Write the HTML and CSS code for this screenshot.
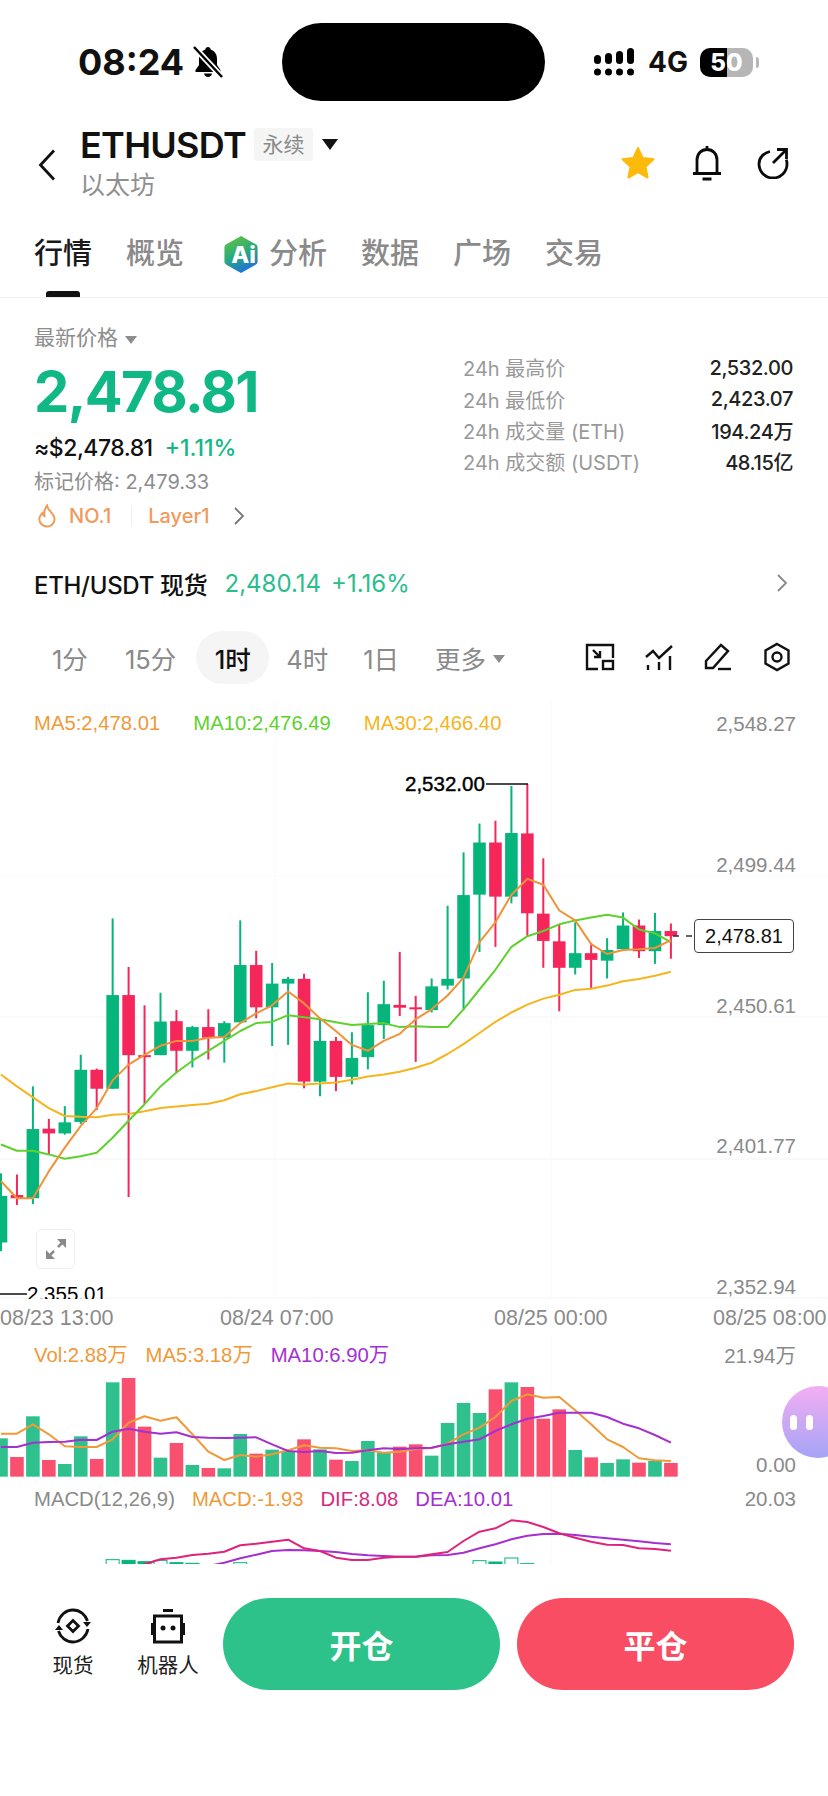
FILE: index.html
```html
<!DOCTYPE html>
<html lang="zh-CN">
<head>
    <meta charset="UTF-8">
    <meta name="viewport" content="width=device-width, initial-scale=1.0">
    <title>ETHUSDT</title>
    <link rel="stylesheet" href="styles.css">
</head>
<body>
    <div class="page">
        <div class="status-bar">
            <div class="status-left">
                <span class="clock">08:24</span>
                <svg class="mute-icon" viewBox="0 0 30 32" width="30" height="32">
                    <path d="M15 1c-1.500 0-2.500 1-2.700 2.500C8 5 6 8.500 6 13v6l-3.500 5v2h25v-2L24 19v-6c0-4.500-2-8-6.300-9.500C17.500 2 16.500 1 15 1z" fill="#000"/>
                    <path d="M11 27.500h8c-.3 2.200-2 3.500-4 3.500s-3.700-1.300-4-3.500z" fill="#000"/>
                    <path d="M1 1l28 30" stroke="#fff" stroke-width="6"/>
                    <path d="M1 1l28 30" stroke="#000" stroke-width="2.500"/>
                </svg>
            </div>
            <div class="island"></div>
            <div class="status-right">
                <svg viewBox="0 0 44 30" width="44" height="30">
                    <g fill="#000">
                        <rect x="2" y="8" width="7" height="9" rx="3.500"/>
                        <rect x="13" y="6" width="7" height="11" rx="3.500"/>
                        <rect x="24" y="4" width="7" height="13" rx="3.500"/>
                        <rect x="35" y="1" width="7" height="16" rx="3.500"/>
                        <circle cx="5.500" cy="25" r="3.500"/>
                        <circle cx="16.500" cy="25" r="3.500"/>
                        <circle cx="27.500" cy="25" r="3.500"/>
                        <circle cx="38.500" cy="25" r="3.500"/>
                    </g>
                </svg>
                <span class="network">4G</span>
                <span class="battery">50</span>
            </div>
        </div>

        <div class="header">
            <svg class="back-icon" viewBox="0 0 18 32" width="18" height="32">
                <path d="M16 1.500L2.500 16 16 30.500" fill="none" stroke="#111" stroke-width="2.800"/>
            </svg>
            <div class="title-block">
                <div class="title-row">
                    <span class="symbol">ETHUSDT</span>
                    <span class="badge">永续</span>
                    <span class="title-caret"></span>
                </div>
                <div class="subtitle">以太坊</div>
            </div>
            <div class="header-actions">
                <svg viewBox="0 0 36 36" width="36" height="36">
                    <path d="M18 3l4.600 10 10.900 1.300-8 7.500 2.100 10.700L18 27.200 8.400 32.500l2.100-10.700-8-7.500L13.400 13z" fill="#fdba0a" stroke="#fdba0a" stroke-width="2" stroke-linejoin="round"/>
                </svg>
                <svg viewBox="0 0 30 36" width="30" height="36">
                    <path d="M15 1v3M5 28V15C5 9 9 4.500 15 4.500S25 9 25 15v13M1 28.500h28M10.500 34h9" fill="none" stroke="#0a0a0a" stroke-width="2.800"/>
                </svg>
                <svg viewBox="0 0 32 32" width="32" height="32">
                    <path d="M13 4.500C7 5.800 2 10.500 2 17a14 14 0 0 0 28 0c0-1.500-.2-3-.7-4.400" fill="none" stroke="#0a0a0a" stroke-width="2.800"/>
                    <path d="M16 16L29 3M20 2.500h9.500V12" fill="none" stroke="#0a0a0a" stroke-width="2.800"/>
                </svg>
            </div>
        </div>

        <div class="tabs">
            <span class="tab tab-active">行情</span>
            <span class="tab">概览</span>
            <span class="tab tab-ai">
                <svg viewBox="0 0 36 40" width="36" height="39">
                    <defs>
                        <linearGradient id="ai-fill" x1="0.200" y1="0" x2="0.600" y2="1">
                            <stop offset="0" stop-color="#62c23f"/>
                            <stop offset="0.500" stop-color="#2bab7c"/>
                            <stop offset="1" stop-color="#1c6fe0"/>
                        </linearGradient>
                    </defs>
                    <path d="M18 1l15 8.500c1.200.7 2 1.800 2 3.200v14.600c0 1.400-.8 2.500-2 3.200L18 39 3 30.500c-1.200-.7-2-1.800-2-3.200V12.700c0-1.400.8-2.500 2-3.200z" fill="url(#ai-fill)"/>
                    <text class="ai-letters" x="8" y="29">Ai</text>
                </svg>
                分析
            </span>
            <span class="tab">数据</span>
            <span class="tab">广场</span>
            <span class="tab">交易</span>
        </div>

        <div class="summary">
            <div class="summary-left">
                <div class="price-label">最新价格<span class="small-caret"></span></div>
                <div class="last-price">2,478.81</div>
                <div class="price-sub">
                    <span class="usd-price">≈$2,478.81</span>
                    <span class="change">+1.11%</span>
                </div>
                <div class="mark-price">标记价格: 2,479.33</div>
                <div class="tags">
                    <svg viewBox="0 0 20 24" width="20" height="24">
                        <path d="M10 1.500c.5 4 5 6.500 7 11 1.800 4.500-1.500 10-7 10S1.300 17.500 2.700 13c.6-1.800 1.700-3 2.800-4 .3 1.500.8 2.500 2 3C7 8 8 4 10 1.500z" fill="none" stroke="#f09a5c" stroke-width="2"/>
                    </svg>
                    <span class="tag-text tag-rank">NO.1</span>
                    <span class="tag-divider"></span>
                    <span class="tag-text">Layer1</span>
                    <svg class="tag-arrow" viewBox="0 0 12 20" width="12" height="20">
                        <path d="M2 2l8 8-8 8" fill="none" stroke="#777" stroke-width="1.800"/>
                    </svg>
                </div>
            </div>
            <div class="stats">
                <div class="stat-row"><span>24h 最高价</span><b>2,532.00</b></div>
                <div class="stat-row"><span>24h 最低价</span><b>2,423.07</b></div>
                <div class="stat-row"><span>24h 成交量 (ETH)</span><b>194.24万</b></div>
                <div class="stat-row"><span>24h 成交额 (USDT)</span><b>48.15亿</b></div>
            </div>
        </div>

        <div class="spot-row">
            <span class="spot-name">ETH/USDT 现货</span>
            <span class="spot-price">2,480.14</span>
            <span class="spot-price">+1.16%</span>
            <svg class="spot-arrow" viewBox="0 0 12 20" width="12" height="20">
                <path d="M2 2l8 8-8 8" fill="none" stroke="#888" stroke-width="1.800"/>
            </svg>
        </div>

        <div class="timeframes">
            <span class="frame">1分</span>
            <span class="frame frame-15m">15分</span>
            <span class="frame frame-active">1时</span>
            <span class="frame frame-4h">4时</span>
            <span class="frame frame-1d">1日</span>
            <span class="frame frame-more">更多<span class="small-caret"></span></span>
            <div class="chart-tools">
                <svg viewBox="0 0 30 30" width="30" height="30">
                    <g fill="none" stroke="#111" stroke-width="2.400">
                        <path d="M13 27H2V3h26v13"/>
                        <rect x="18" y="19" width="10" height="8"/>
                        <path d="M8 8l7 7M15 9v6H9"/>
                    </g>
                </svg>
                <svg viewBox="0 0 30 30" width="30" height="30">
                    <g fill="none" stroke="#111" stroke-width="2.400">
                        <path d="M2 15l7-6 6 7 13-12"/>
                        <path d="M4 23v5M15 20v8M26 14v14"/>
                    </g>
                </svg>
                <svg viewBox="0 0 30 30" width="30" height="30">
                    <g fill="none" stroke="#111" stroke-width="2.400">
                        <path d="M3 19L18 3l7 6L10 26H3z"/>
                        <path d="M15 27h13"/>
                    </g>
                </svg>
                <svg viewBox="0 0 30 30" width="30" height="30">
                    <g fill="none" stroke="#111" stroke-width="2.400">
                        <path d="M15 2l11.500 6.500v13L15 28 3.500 21.500v-13z"/>
                        <circle cx="15" cy="15" r="4.500"/>
                    </g>
                </svg>
            </div>
        </div>

        <div class="chart">
            <div class="pane pane-main">
                <svg id="main-svg" class="pane-svg" width="828" height="598"></svg>
                <div class="legend">
                    <span class="c-orange">MA5:2,478.01</span>
                    <span class="c-green">MA10:2,476.49</span>
                    <span class="c-yellow">MA30:2,466.40</span>
                </div>
                <div class="price-axis">
                    <span>2,548.27</span>
                    <span>2,499.44</span>
                    <span>2,450.61</span>
                    <span>2,401.77</span>
                    <span>2,352.94</span>
                </div>
                <div class="marker marker-high">2,532.00</div>
                <div class="marker marker-low">2,355.01</div>
                <div class="last-tag">2,478.81</div>
                <div class="expand-btn">
                    <svg viewBox="0 0 22 22" width="22" height="22">
                        <path d="M2 20l7-7M13 9l7-7" stroke="#8a8a8a" stroke-width="2.500"/>
                        <path d="M1 12v9h9zM21 10V1h-9z" fill="#8a8a8a"/>
                    </svg>
                </div>
            </div>
            <div class="time-axis">
                <span>08/23 13:00</span>
                <span>08/24 07:00</span>
                <span>08/25 00:00</span>
                <span>08/25 08:00</span>
            </div>
            <div class="pane pane-vol">
                <svg id="vol-svg" class="pane-svg" width="828" height="147"></svg>
                <div class="legend legend-vol">
                    <span class="c-orange">Vol:2.88万</span>
                    <span class="c-orange">MA5:3.18万</span>
                    <span class="c-purple">MA10:6.90万</span>
                </div>
                <span class="side-value vol-max">21.94万</span>
                <span class="side-value vol-min">0.00</span>
            </div>
            <div class="pane pane-macd">
                <svg id="macd-svg" class="pane-svg" width="828" height="80"></svg>
                <div class="legend legend-macd">
                    <span class="c-gray">MACD(12,26,9)</span>
                    <span class="c-orange">MACD:-1.93</span>
                    <span class="c-pink">DIF:8.08</span>
                    <span class="c-purple">DEA:10.01</span>
                </div>
                <span class="side-value macd-max">20.03</span>
            </div>
            <div class="float-bubble">
                <span class="bubble-eye"></span>
                <span class="bubble-eye"></span>
            </div>
        </div>

        <div class="bottom-bar">
            <div class="quick quick-spot">
                <svg viewBox="0 0 36 36" width="36" height="36">
                    <g fill="none" stroke="#111" stroke-width="2.800">
                        <path d="M3 15C4.500 7.500 10.500 2 18 2c7 0 12.500 4.500 14.500 11"/>
                        <path d="M33 21c-1.500 7.500-7.500 13-15 13-7 0-12.500-4.500-14.500-11"/>
                        <path d="M18 12.500l5.500 5.500-5.500 5.500-5.500-5.500z"/>
                    </g>
                    <path d="M28 14h8l-4 5zM0 22h8l-4-5z" fill="#111"/>
                </svg>
                <span>现货</span>
            </div>
            <div class="quick quick-bot">
                <svg viewBox="0 0 36 36" width="36" height="36">
                    <rect x="13" y="1" width="10" height="3" fill="#111"/>
                    <rect x="4.500" y="8" width="27" height="26" fill="none" stroke="#111" stroke-width="3"/>
                    <rect x="1" y="15" width="3" height="12" fill="#111"/>
                    <rect x="32" y="15" width="3" height="12" fill="#111"/>
                    <circle cx="13" cy="20" r="2.500" fill="#111"/>
                    <circle cx="23" cy="20" r="2.500" fill="#111"/>
                </svg>
                <span>机器人</span>
            </div>
            <button class="trade-btn btn-open">开仓</button>
            <button class="trade-btn btn-close">平仓</button>
        </div>
    </div>
    <script src="chart.js"></script>
</body>
</html>
```

FILE: styles.css
```css
* {
    margin: 0;
    padding: 0;
    box-sizing: border-box;
}

body {
    background-color: #ffffff;
    color: #111111;
    font-family: Inter, 'Noto Sans CJK SC', sans-serif;
}

svg {
    display: block;
    flex-shrink: 0;
}

.page {
    width: 828px;
    height: 1796px;
    overflow: hidden;
}

/* status bar */
.status-bar {
    display: grid;
    grid-template-columns: 282px 263px 283px;
    align-items: center;
    align-content: start;
    height: 120px;
    padding-top: 23px;
}

.status-left {
    display: flex;
    align-items: center;
    gap: 9px;
    padding-left: 78px;
}

.clock {
    font-size: 36px;
    font-weight: 700;
    line-height: 1;
}

.island {
    height: 78px;
    background-color: #000000;
    border-radius: 39px;
}

.status-right {
    display: flex;
    align-items: center;
    gap: 12px;
    padding-left: 47px;
}

.network {
    font-size: 28px;
    font-weight: 700;
    line-height: 1;
}

.battery {
    position: relative;
    width: 53px;
    height: 29px;
    border-radius: 10px;
    background: linear-gradient(90deg, #000000 51%, #b6b6b6 51%);
    color: #ffffff;
    font-size: 24px;
    font-weight: 800;
    line-height: 29px;
    text-align: center;
}

.battery::after {
    content: '';
    position: absolute;
    right: -6px;
    top: 9px;
    width: 3px;
    height: 11px;
    border-radius: 0 3px 3px 0;
    background-color: #b6b6b6;
}

/* header */
.header {
    display: flex;
    align-items: center;
    height: 85px;
    padding: 0 38px;
}

.back-icon {
    margin-top: 4px;
}

.title-block {
    margin-left: 24px;
}

.title-row {
    display: flex;
    align-items: center;
    height: 42px;
    margin-bottom: 2px;
}

.symbol {
    font-size: 36px;
    font-weight: 600;
    letter-spacing: -0.7px;
}

.badge {
    margin-left: 8px;
    width: 59px;
    height: 33px;
    background-color: #f5f5f5;
    border-radius: 3px;
    color: #8a8a8a;
    font-size: 21px;
    line-height: 33px;
    text-align: center;
}

.title-caret {
    margin-left: 9px;
    border-left: 8px solid transparent;
    border-right: 8px solid transparent;
    border-top: 11px solid #111111;
}

.subtitle {
    color: #8f8f8f;
    font-size: 25px;
    line-height: 34px;
}

.header-actions {
    display: flex;
    align-items: center;
    gap: 35px;
    margin-left: auto;
    margin-right: 1px;
}

.header-actions svg:first-child {
    margin-right: 1px;
}

/* tabs */
.tabs {
    display: flex;
    align-items: center;
    gap: 34px;
    height: 93px;
    padding: 6px 0 0 34px;
    border-bottom: 1px solid #eeeeee;
}

.tab {
    position: relative;
    display: flex;
    align-items: center;
    gap: 10px;
    color: #8a8a8a;
    font-size: 29px;
    font-weight: 500;
    line-height: 40px;
}

.tab-active {
    color: #1a1a1a;
}

.tab-active::after {
    content: '';
    position: absolute;
    left: 12px;
    bottom: -23px;
    width: 34px;
    height: 6px;
    border-radius: 3px 3px 0 0;
    background-color: #111111;
}

.tab-ai {
    margin-left: 5px;
}

.ai-letters {
    fill: #ffffff;
    font-family: Inter, sans-serif;
    font-size: 24px;
    font-weight: 800;
}

/* price summary */
.summary {
    display: flex;
    justify-content: space-between;
    height: 267px;
    padding: 26px 35px 0 34px;
}

.price-label {
    display: flex;
    align-items: center;
    color: #8d8d8d;
    font-size: 21px;
    line-height: 28px;
}

.small-caret {
    margin-left: 7px;
    margin-top: 3px;
    border-left: 6px solid transparent;
    border-right: 6px solid transparent;
    border-top: 8px solid #8d8d8d;
}

.last-price {
    margin-top: 10px;
    color: #0fb884;
    font-size: 56px;
    font-weight: 700;
    line-height: 60px;
    letter-spacing: -1.600px;
}

.price-sub {
    display: flex;
    gap: 12px;
    margin-top: 10px;
    font-size: 23px;
    line-height: 32px;
}

.usd-price {
    font-weight: 500;
    letter-spacing: -0.5px;
}

.change {
    color: #12b886;
    font-weight: 500;
}

.mark-price {
    margin-top: 2px;
    color: #8d8d8d;
    font-size: 20px;
    line-height: 32px;
}

.tags {
    display: flex;
    align-items: center;
    margin-top: 4px;
    margin-left: 3px;
}

.tag-text {
    color: #f09a5c;
    font-size: 20px;
    font-weight: 500;
    line-height: 28px;
}

.tag-rank {
    margin-left: 12px;
}

.tag-divider {
    width: 1px;
    height: 20px;
    margin: 0 16px 0 20px;
    background-color: #eeeeee;
}

.tag-arrow {
    margin-left: 24px;
}

.stats {
    width: 330px;
    padding-top: 28px;
}

.stat-row {
    display: flex;
    justify-content: space-between;
    align-items: center;
    height: 31.400px;
    color: #999999;
    font-size: 20px;
}

.stat-row b {
    color: #222222;
    font-size: 20px;
    font-weight: 500;
    letter-spacing: -0.4px;
}

/* spot row */
.spot-row {
    display: flex;
    align-items: center;
    height: 36px;
    padding: 0 40px 0 34px;
    font-size: 24px;
}

.spot-name {
    margin-right: 17px;
    font-weight: 500;
    letter-spacing: -0.3px;
}

.spot-price {
    margin-right: 10px;
    color: #2bbd8d;
}

.spot-arrow {
    margin-left: auto;
}

/* timeframes */
.timeframes {
    display: flex;
    align-items: center;
    height: 54px;
    margin-top: 29px;
    padding-left: 52px;
    color: #8a8a8a;
    font-size: 25.500px;
}

.frame {
    display: flex;
    align-items: center;
    white-space: nowrap;
}

.frame-15m {
    margin-left: 37px;
}

.frame-active {
    justify-content: center;
    width: 73px;
    height: 53px;
    margin-left: 20px;
    border-radius: 27px;
    background-color: #f5f5f5;
    color: #111111;
    font-weight: 500;
}

.frame-4h {
    margin-left: 17px;
}

.frame-1d {
    margin-left: 35px;
}

.frame-more {
    margin-left: 36px;
}

.chart-tools {
    display: flex;
    gap: 29px;
    margin-left: auto;
    padding-right: 36px;
}

/* chart */
.chart {
    position: relative;
    margin-top: 17px;
    font-family: 'Liberation Sans', 'Noto Sans CJK SC', sans-serif;
}

.pane {
    position: relative;
    overflow: hidden;
}

.pane-main {
    height: 598px;
}

.pane-vol {
    height: 147px;
}

.pane-macd {
    height: 80px;
}

.pane-svg {
    position: absolute;
    left: 0;
    top: 0;
}

.legend {
    position: relative;
    display: flex;
    gap: 33px;
    padding: 8px 0 0 34px;
    font-size: 20.300px;
    line-height: 28px;
}

.legend-vol {
    gap: 18px;
    padding-top: 4px;
}

.legend-macd {
    gap: 17px;
    padding-top: 1px;
}

.c-orange { color: #f0993a; }
.c-green { color: #5fd12f; }
.c-yellow { color: #f5b51e; }
.c-purple { color: #a52fd0; }
.c-pink { color: #d62a7e; }
.c-gray { color: #8a8a8a; }

.price-axis {
    position: absolute;
    right: 32px;
    top: 9px;
    display: flex;
    flex-direction: column;
    gap: 112.750px;
    color: #8a8a8a;
    font-size: 20.500px;
    line-height: 28px;
    text-align: right;
}

.marker {
    position: absolute;
    color: #000000;
    font-size: 20.500px;
    line-height: 24px;
}

.marker-high {
    left: 405px;
    top: 71px;
    -webkit-text-stroke: 0.4px #000000;
}

.marker-low {
    left: 27px;
    top: 581px;
}

.last-tag {
    position: absolute;
    left: 694px;
    top: 218px;
    width: 100px;
    height: 34px;
    border: 1px solid #444444;
    border-radius: 4px;
    background-color: #ffffff;
    font-size: 20px;
    line-height: 32px;
    text-align: center;
}

.expand-btn {
    position: absolute;
    left: 36px;
    top: 528px;
    display: flex;
    align-items: center;
    justify-content: center;
    width: 39px;
    height: 40px;
    border: 1px solid #eeeeee;
    border-radius: 6px;
    background-color: #ffffff;
}

.time-axis {
    display: grid;
    grid-template-columns: 220px 274px 219px auto;
    height: 38px;
    color: #8a8a8a;
    font-size: 21.500px;
    line-height: 38px;
    white-space: nowrap;
}

.side-value {
    position: absolute;
    right: 32px;
    color: #8a8a8a;
    font-size: 20.500px;
    line-height: 28px;
}

.vol-max {
    top: 5px;
}

.vol-min {
    top: 114px;
}

.macd-max {
    top: 1px;
}

.float-bubble {
    position: absolute;
    left: 782px;
    top: 685px;
    display: flex;
    align-items: center;
    gap: 9px;
    width: 72px;
    height: 72px;
    padding-left: 8px;
    border-radius: 50%;
    background: linear-gradient(180deg, #f3aef3, #a5a3f6);
}

.bubble-eye {
    width: 7px;
    height: 15px;
    border-radius: 4px;
    background-color: #ffffff;
}

/* bottom bar */
.bottom-bar {
    display: flex;
    align-items: flex-start;
    margin-top: 34px;
    padding: 0 34px 0 33px;
}

.quick {
    display: flex;
    flex-direction: column;
    align-items: center;
    gap: 8px;
    padding-top: 10px;
    color: #222222;
    font-size: 20.500px;
    line-height: 28px;
}

.quick-spot {
    width: 80px;
}

.quick-bot {
    width: 110px;
}

.trade-btn {
    width: 277px;
    height: 92px;
    border: none;
    border-radius: 46px;
    color: #ffffff;
    font-family: 'Noto Sans CJK SC', sans-serif;
    font-size: 32px;
    font-weight: 700;
}

.btn-open {
    background-color: #2dc28a;
}

.btn-close {
    margin-left: 17px;
    background-color: #f94d63;
}
```

FILE: chart.js
```js
// All y values below were read off the chart at a 3x trace, so they get scaled down when drawn
const NS = 'http://www.w3.org/2000/svg';
const GREEN = '#06b57c';
const RED = '#f5265a';
const VOL_GREEN = '#2ec08d';
const VOL_RED = '#fa5070';

function xAt(i) {
    return 1 + 15.95 * i;
}

function add(svg, tag, attrs) {
    const el = document.createElementNS(NS, tag);
    for (const key in attrs) {
        el.setAttribute(key, attrs[key]);
    }
    svg.appendChild(el);
    return el;
}

function drawLine(svg, values, start, color, toY) {
    const points = values.map((v, i) => xAt(i + start).toFixed(1) + ',' + toY(v).toFixed(1));
    add(svg, 'polyline', {
        points: points.join(' '),
        fill: 'none',
        stroke: color,
        'stroke-width': 2,
        'stroke-linejoin': 'round'
    });
}

// [wick top, wick bottom, body top, body bottom, up?]
const candles = [
    [1195, 1392, 1252, 1370, 1], [1198, 1275, 1250, 1258, 0], [975, 1273, 1083, 1258, 1],
    [1057, 1147, 1082, 1094, 0], [1025, 1097, 1066, 1094, 1], [895, 1070, 933, 1065, 1],
    [930, 1035, 933, 981, 0], [550, 981, 744, 981, 1], [673, 1255, 744, 896, 0],
    [770, 1020, 896, 898, 0], [738, 896, 811, 896, 1], [782, 942, 810, 885, 0],
    [822, 927, 825, 885, 1], [780, 907, 825, 852, 0], [810, 915, 815, 852, 1],
    [555, 813, 668, 813, 1], [632, 803, 668, 775, 0], [663, 873, 715, 775, 1],
    [698, 870, 703, 715, 1], [690, 980, 703, 963, 0], [805, 1000, 860, 963, 1],
    [850, 987, 860, 951, 0], [838, 970, 903, 951, 1], [737, 932, 820, 901, 1],
    [708, 855, 767, 820, 1], [635, 797, 769, 776, 0], [746, 913, 775, 780, 0],
    [702, 788, 722, 782, 1], [518, 730, 703, 720, 1], [383, 782, 491, 702, 1],
    [310, 635, 358, 490, 1], [303, 622, 358, 495, 0], [215, 512, 334, 495, 1],
    [210, 597, 335, 537, 0], [398, 675, 538, 607, 0], [565, 785, 608, 675, 0],
    [560, 692, 638, 675, 1], [612, 728, 638, 655, 0], [600, 702, 630, 657, 1],
    [535, 628, 568, 628, 1], [553, 650, 568, 633, 0], [536, 665, 582, 633, 1],
    [563, 652, 582, 595, 0]
];

const ma5 = [1215, 1258, 1258, 1190, 1130, 1075, 1030, 960, 920, 895, 872, 860, 860, 852, 850, 815, 790, 770, 735, 765, 803, 835, 870, 885, 860, 842, 805, 780, 745, 700, 610, 560, 490, 450, 465, 530, 555, 615, 640, 630, 628, 625, 605];
const ma10 = [1122, 1138, 1138, 1147, 1158, 1152, 1143, 1105, 1062, 1020, 975, 940, 910, 885, 860, 835, 815, 812, 795, 800, 805, 813, 820, 817, 815, 825, 823, 825, 825, 780, 730, 680, 622, 595, 582, 565, 555, 548, 541, 548, 578, 588, 610];
const ma30 = [945, 975, 1003, 1030, 1050, 1052, 1053, 1047, 1045, 1038, 1030, 1026, 1022, 1019, 1010, 995, 987, 977, 968, 970, 968, 965, 958, 950, 945, 938, 928, 915, 893, 868, 840, 812, 788, 768, 753, 743, 731, 728, 720, 709, 703, 695, 685];

const volTops = [382, 438, 316, 447, 459, 376, 444, 214, 201, 347, 440, 396, 462, 471, 472, 369, 428, 416, 420, 385, 415, 446, 450, 390, 425, 407, 400, 434, 336, 276, 306, 235, 214, 228, 323, 295, 417, 439, 456, 445, 455, 450, 456];
const volRed = [1, 3, 6, 8, 9, 11, 13, 16, 19, 21, 25, 26, 31, 33, 34, 35, 37, 40, 42];
const volMa5 = [368, 368, 340, 370, 406, 408, 408, 385, 335, 316, 329, 319, 370, 422, 447, 432, 437, 430, 418, 403, 410, 412, 420, 418, 425, 422, 414, 411, 398, 370, 350, 318, 270, 250, 260, 258, 298, 340, 385, 408, 442, 448, 450];
const volMa10 = [408, 408, 395, 393, 392, 386, 387, 362, 353, 362, 368, 364, 378, 380, 381, 380, 379, 400, 420, 423, 420, 426, 425, 418, 412, 414, 412, 410, 400, 392, 385, 360, 340, 323, 315, 305, 305, 305, 318, 338, 352, 372, 395];

const dif = [760, 745, 740, 732, 728, 722, 703, 698, 692, 686, 712, 720, 740, 747, 747, 740, 737, 737, 730, 723, 690, 662, 652, 628, 633, 648, 667, 680, 692, 701, 702, 712, 714, 719];
const dea = [765, 755, 742, 731, 720, 717, 718, 720, 723, 729, 733, 735, 737, 737, 733, 732, 725, 712, 700, 685, 674, 669, 668, 672, 677, 682, 686, 691, 696, 700];
// [candle index, top, hollow?]
const macdBars = [[7, 746, 1], [8, 748, 0], [9, 752, 0], [10, 748, 1], [11, 755, 0], [12, 757, 0], [15, 755, 1], [30, 749, 1], [31, 753, 0], [32, 741, 1], [33, 758, 0]];

function drawMain() {
    const svg = document.getElementById('main-svg');
    const toY = v => v / 2.53;

    [175, 316, 458, 597].forEach(y => {
        add(svg, 'line', { x1: 0, x2: 828, y1: y, y2: y, stroke: y === 175 ? '#fafafa' : '#f4f4f4', 'stroke-width': 1 });
    });
    [275, 551].forEach(x => {
        add(svg, 'line', { x1: x, x2: x, y1: 0, y2: 598, stroke: '#f8f8f8', 'stroke-width': 1 });
    });

    candles.forEach((c, i) => {
        const color = c[4] ? GREEN : RED;
        add(svg, 'rect', { x: xAt(i) - 1, y: toY(c[0]), width: 2, height: toY(c[1] - c[0]), fill: color });
        add(svg, 'rect', { x: xAt(i) - 6.3, y: toY(c[2]), width: 12.6, height: Math.max(toY(c[3] - c[2]), 2), fill: color });
    });

    drawLine(svg, ma30, 0, '#f5b51e', toY);
    drawLine(svg, ma10, 0, '#5fd12f', toY);
    drawLine(svg, ma5, 0, '#f0923a', toY);

    // high and low leader lines, dashes up to the last price
    add(svg, 'path', { d: 'M486 83H528M0 593H27', stroke: '#111', 'stroke-width': 1.5, fill: 'none' });
    add(svg, 'path', { d: 'M673 235H679M686 235H692', stroke: '#333', 'stroke-width': 1.5, fill: 'none' });
}

function drawVolume() {
    const svg = document.getElementById('vol-svg');
    const toY = v => v / 3 - 26;
    const base = toY(497);

    add(svg, 'line', { x1: 551, x2: 551, y1: 0, y2: 147, stroke: '#f8f8f8', 'stroke-width': 1 });

    volTops.forEach((top, i) => {
        add(svg, 'rect', {
            x: xAt(i) - 6.8,
            y: toY(top),
            width: 13.6,
            height: base - toY(top),
            fill: volRed.includes(i) ? VOL_RED : VOL_GREEN
        });
    });

    drawLine(svg, volMa5, 0, '#f0993a', toY);
    drawLine(svg, volMa10, 0, '#a52fd0', toY);
}

function drawMacd() {
    const svg = document.getElementById('macd-svg');
    const toY = v => v / 3 - 173;

    add(svg, 'line', { x1: 551, x2: 551, y1: 0, y2: 80, stroke: '#f8f8f8', 'stroke-width': 1 });

    macdBars.forEach(b => {
        add(svg, 'rect', {
            x: xAt(b[0]) - 6.5,
            y: toY(b[1]),
            width: 13,
            height: 20,
            fill: b[2] ? '#fff' : GREEN,
            stroke: GREEN,
            'stroke-width': 1
        });
    });

    drawLine(svg, dea, 13, '#a52fd0', toY);
    drawLine(svg, dif, 9, '#e0237a', toY);
}

drawMain();
drawVolume();
drawMacd();
```
